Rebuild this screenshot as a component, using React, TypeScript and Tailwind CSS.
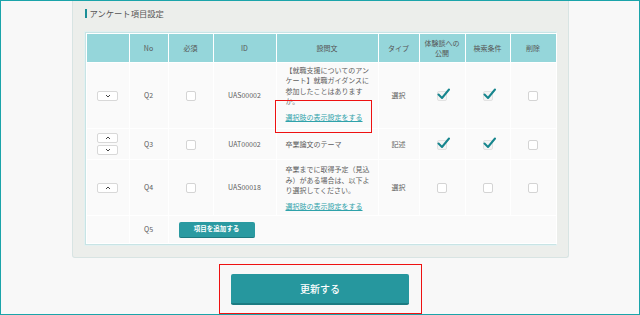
import React from 'react'

const font = { fontFamily: '"Noto Sans CJK JP", "Noto Sans", sans-serif' }

function Check({ on }: { on: boolean }) {
  return (
    <span className="relative inline-block w-[10px] h-[10px] align-middle">
      <span className={`absolute inset-0 rounded-[2px] border ${on ? 'border-[#e2e2e2] bg-[#f4f4f4]' : 'border-[#d4d4d4] bg-white'}`} />
      {on && (
        <svg className="absolute left-[0px] top-[-3px]" width="13" height="12" viewBox="0 0 13 12">
          <path d="M1.5 6.5 L5 10 L12 1.5" fill="none" stroke="#16858d" strokeWidth="2" strokeLinecap="round" strokeLinejoin="round" />
        </svg>
      )}
    </span>
  )
}

function Arrow({ dir }: { dir: 'up' | 'down' }) {
  return (
    <span className="flex items-center justify-center w-[21px] h-[10px] bg-white border border-[#d8d8d8] rounded-[2px]">
      <svg width="6" height="4" viewBox="0 0 6 4">
        <path d={dir === 'down' ? 'M1 1 L3 3 L5 1' : 'M1 3 L3 1 L5 3'} fill="none" stroke="#444" strokeWidth="1" />
      </svg>
    </span>
  )
}

const td = 'border-[1.5px] border-white text-center align-middle text-[7px] text-[#606060]'
const th = 'border-[1.5px] border-white bg-[#95d6da] text-center align-middle text-[7px] font-normal text-[#555] leading-[10px]'

function Link() {
  return <span className="text-[#2fa2aa] underline underline-offset-1">選択肢の表示設定をする</span>
}

export default function App() {
  return (
    <div className="w-[640px] h-[315px] bg-[#f8f8f8] border-[1.5px] border-[#1ba4aa] overflow-hidden" style={font}>
      <div className="mx-auto w-[497px] bg-[#eceeeb] border-x border-b border-[#d8e4e3] rounded-b-[3px] px-[12px] pt-[8px] pb-[12px] mt-[-2px]">
        <div className="flex items-center gap-[3px] h-[12px] mb-[13px]">
          <span className="w-[2px] h-[9px] bg-[#1b8f97]" />
          <span className="text-[8.3px] text-[#555]">アンケート項目設定</span>
        </div>
        <div className="border border-[#c8e4e5] shadow-[0_0_0_1px_#e3f0f0]">
          <table className="w-full table-fixed border-collapse bg-[#fafafa]">
            <colgroup>
              <col className="w-[43px]" />
              <col className="w-[39px]" />
              <col className="w-[45px]" />
              <col className="w-[63px]" />
              <col className="w-[102px]" />
              <col className="w-[41px]" />
              <col className="w-[46px]" />
              <col className="w-[45px]" />
              <col className="w-[46px]" />
            </colgroup>
            <thead>
              <tr className="h-[29px]">
                <th className={th}></th>
                <th className={th}>No</th>
                <th className={th}>必須</th>
                <th className={th}>ID</th>
                <th className={th}>設問文</th>
                <th className={th}>タイプ</th>
                <th className={th}>体験談への<br />公開</th>
                <th className={th}>検索条件</th>
                <th className={th}>削除</th>
              </tr>
            </thead>
            <tbody>
              <tr className="h-[66px]">
                <td className={td}><div className="flex justify-center"><Arrow dir="down" /></div></td>
                <td className={td}>Q2</td>
                <td className={td}><Check on={false} /></td>
                <td className={td}>UAS00002</td>
                <td className={`${td} text-left px-[9px] pb-[4px]`}>
                  <div className="leading-[10.5px] w-[86px]">【就職支援についてのアンケート】就職ガイダンスに参加したことはありますか。</div>
                  <div className="mt-[3px] relative">
                    <span className="absolute left-[-11px] top-[-10px] w-[97px] h-[33px] border border-[#e11]" />
                    <span className="relative leading-[12px] inline-block pt-[1px]"><Link /></span>
                  </div>
                </td>
                <td className={td}>選択</td>
                <td className={td}><Check on /></td>
                <td className={td}><Check on /></td>
                <td className={td}><Check on={false} /></td>
              </tr>
              <tr className="h-[31px]">
                <td className={td}>
                  <div className="flex flex-col items-center gap-[2px]"><Arrow dir="up" /><Arrow dir="down" /></div>
                </td>
                <td className={td}>Q3</td>
                <td className={td}><Check on={false} /></td>
                <td className={td}>UAT00002</td>
                <td className={`${td} text-left px-[9px]`}>卒業論文のテーマ</td>
                <td className={td}>記述</td>
                <td className={td}><Check on /></td>
                <td className={td}><Check on /></td>
                <td className={td}><Check on={false} /></td>
              </tr>
              <tr className="h-[56px]">
                <td className={td}><div className="flex justify-center"><Arrow dir="up" /></div></td>
                <td className={td}>Q4</td>
                <td className={td}><Check on={false} /></td>
                <td className={td}>UAS00018</td>
                <td className={`${td} text-left px-[9px]`}>
                  <div className="leading-[10.5px] w-[86px]">卒業までに取得予定（見込み）がある場合は、以下より選択してください。</div>
                  <div className="mt-[5px] leading-[10px]"><Link /></div>
                </td>
                <td className={td}>選択</td>
                <td className={td}><Check on={false} /></td>
                <td className={td}><Check on={false} /></td>
                <td className={td}><Check on={false} /></td>
              </tr>
              <tr className="h-[28px]">
                <td className={td}></td>
                <td className={td}>Q5</td>
                <td colSpan={7} className={`${td} text-left pl-[10px]`}>
                  <button className="w-[76px] h-[16px] bg-[#2a9aa1] border-b-[1.5px] border-[#1d7a80] rounded-[2px] text-white text-[6.5px] font-bold">項目を追加する</button>
                </td>
              </tr>
            </tbody>
          </table>
        </div>
      </div>
      <div className="flex justify-center mt-[6px]">
        <div className="border border-[#e11] w-[203px] h-[50px] flex items-center justify-center">
          <button className="w-[178px] h-[31px] bg-[#26979e] border-b-2 border-[#1c7b81] rounded-[2px] text-white text-[10px] font-medium">更新する</button>
        </div>
      </div>
    </div>
  )
}
